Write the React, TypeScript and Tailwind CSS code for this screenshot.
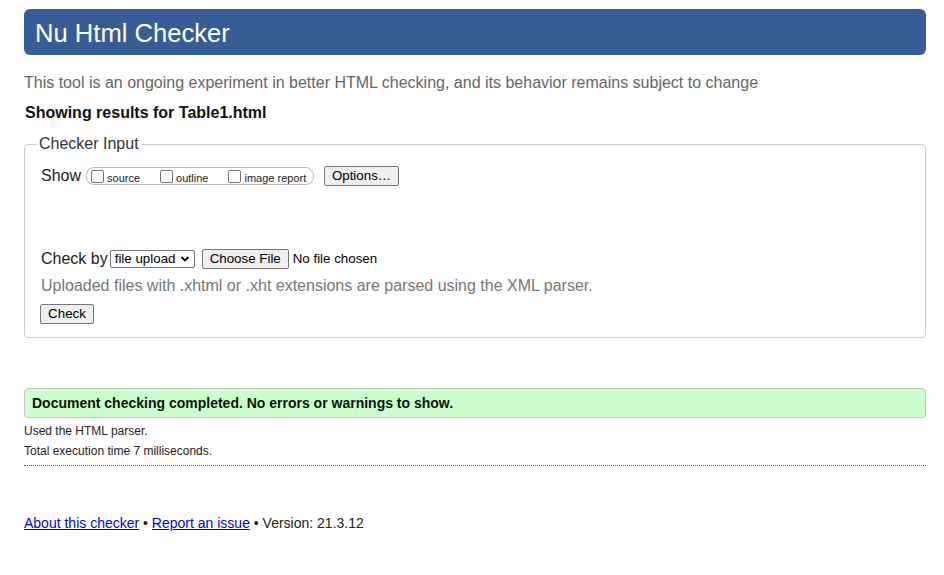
import React from 'react';

const Box = () => (
  <span className="inline-block w-[13px] h-[13px] border border-[#767676] rounded-[2px] bg-white shrink-0" />
);

function Opt({ label, className }: { label: string; className?: string }) {
  return (
    <span className={`flex items-center ${className || ''}`}>
      <Box />
      <span className="ml-[3px] text-[11px] leading-[14px] mt-[3px]">{label}</span>
    </span>
  );
}

export default function App() {
  return (
    <div className="min-h-[575px] bg-white text-[#222] pt-[9px] pl-[24px] pr-[18px]" style={{ fontFamily: '"Liberation Sans", Arial, sans-serif' }}>
      {/* Title bar */}
      <div className="h-[46px] rounded-[6px] bg-[#365d95] flex items-center pl-[11px]">
        <h1 className="text-white text-[25.6px] leading-[30px] mt-[1px]">Nu Html Checker</h1>
      </div>

      <p className="mt-[18px] text-[16px] leading-[20px] text-[#666]">
        This tool is an ongoing experiment in better HTML checking, and its behavior remains subject to change
      </p>
      <p className="mt-[10px] ml-[1px] text-[16px] leading-[20px] font-bold text-[#111]">Showing results for Table1.html</p>

      {/* Checker input */}
      <fieldset className="mt-[11px] border border-[#ccc] rounded-[4px] pl-[12px] pr-[12px] pb-[12px]">
        <legend className="px-[2px] text-[16px] leading-[20px] text-[#333]">Checker Input</legend>
        <div className="pl-[4px]">
          <div className="mt-[12px] flex items-center h-[20px]">
            <span className="text-[16px] leading-[20px]">Show</span>
            <div className="ml-[5px] h-[18px] w-[228px] border border-[#bbb] rounded-[8px] flex items-center pl-[4px]">
              <Opt label="source" />
              <Opt label="outline" className="ml-[20px]" />
              <Opt label="image report" className="ml-[20px]" />
            </div>
            <button className="ml-[10px] h-[20px] w-[75px] border border-[#767676] rounded-[2px] bg-[#efefef] text-[13.33px] leading-[16px] text-black">
              Options…
            </button>
          </div>

          <div className="mt-[63px] flex items-center h-[20px]">
            <span className="text-[16px] leading-[20px]">Check by</span>
            <div className="ml-[2px] h-[18px] w-[85px] border border-[#767676] rounded-[2px] bg-white flex items-center pl-[4px] pr-[4px] text-[13.33px] text-black">
              <span className="flex-1">file upload</span>
              <svg width="10" height="10" viewBox="0 0 10 10" className="shrink-0">
                <path d="M1.5 3 L5 6.5 L8.5 3" fill="none" stroke="#000" strokeWidth="1.8" />
              </svg>
            </div>
            <button className="ml-[7px] h-[20px] w-[87px] border border-[#767676] rounded-[2px] bg-[#efefef] text-[13.33px] leading-[16px] text-black">
              Choose File
            </button>
            <span className="ml-[4px] text-[13.33px] text-black">No file chosen</span>
          </div>

          <p className="mt-[7px] text-[16px] leading-[20px] text-[#777]">
            Uploaded files with .xhtml or .xht extensions are parsed using the XML parser.
          </p>

          <button className="mt-[8px] -ml-[1px] h-[20px] w-[54px] border border-[#767676] rounded-[2px] bg-[#efefef] text-[13.33px] leading-[16px] text-black">
            Check
          </button>
        </div>
      </fieldset>

      {/* Result */}
      <div className="mt-[50px] h-[30px] border border-[#c4c4c4] rounded-[4px] bg-[#ccffcc] flex items-center pl-[7px]">
        <span className="text-[14px] font-bold text-[#111]">Document checking completed. No errors or warnings to show.</span>
      </div>
      <p className="mt-[3px] text-[12px] leading-[20px]">Used the HTML parser.</p>
      <p className="text-[12px] leading-[20px]">Total execution time 7 milliseconds.</p>
      <div className="mt-[4px] border-b border-dotted border-[#555]" />

      {/* Footer */}
      <p className="mt-[47px] text-[14px] leading-[20px]">
        <a href="#" className="text-[#0000ee] underline">About this checker</a>
        {' • '}
        <a href="#" className="text-[#0000ee] underline">Report an issue</a>
        {' • Version: 21.3.12'}
      </p>
    </div>
  );
}
